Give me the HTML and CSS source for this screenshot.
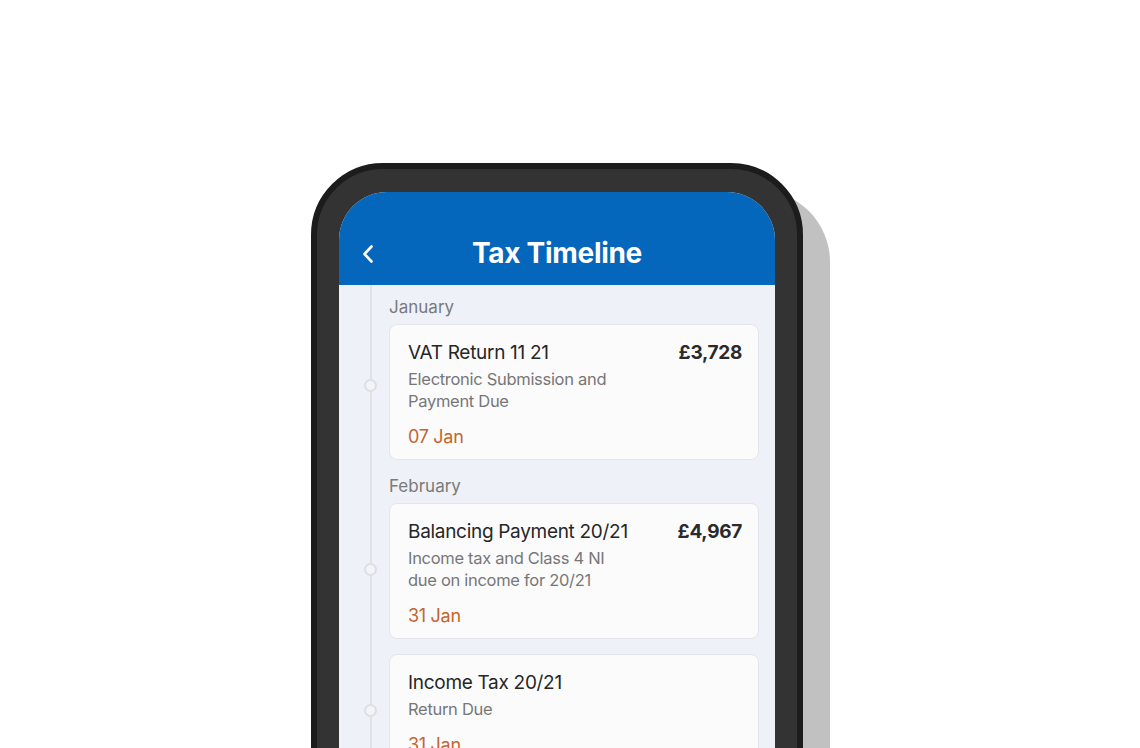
FILE: index.html
```html
<!DOCTYPE html>
<html lang="en">
<head>
  <meta charset="UTF-8">
  <meta name="viewport" content="width=device-width, initial-scale=1.0">
  <title>Tax Timeline</title>
  <link rel="stylesheet" href="styles.css">
</head>
<body>

  <div class="phone">
    <div class="screen">
      <div class="app-bar">
        <span class="back">
          <svg width="14" height="20" viewBox="0 0 14 20">
            <path d="M10.5 2.5 L3.5 10 L10.5 17.5" fill="none" stroke="#fff" stroke-width="2.6" stroke-linecap="round" stroke-linejoin="round"/>
          </svg>
        </span>
        <h1>Tax Timeline</h1>
      </div>

      <div class="timeline">
        <div class="month">January</div>
        <div class="entry">
          <span class="dot dot-first"></span>
          <div class="card">
            <div class="card-top">
              <span class="card-title">VAT Return 11 21</span>
              <span class="amount">£3,728</span>
            </div>
            <p class="desc">Electronic Submission and<br>Payment Due</p>
            <div class="due">07 Jan</div>
          </div>
        </div>

        <div class="month">February</div>
        <div class="entry">
          <span class="dot dot-second"></span>
          <div class="card">
            <div class="card-top">
              <span class="card-title">Balancing Payment 20/21</span>
              <span class="amount">£4,967</span>
            </div>
            <p class="desc">Income tax and Class 4 NI<br>due on income for 20/21</p>
            <div class="due">31 Jan</div>
          </div>
        </div>

        <div class="entry entry-spaced">
          <span class="dot dot-third"></span>
          <div class="card">
            <div class="card-top">
              <span class="card-title">Income Tax 20/21</span>
            </div>
            <p class="desc">Return Due</p>
            <div class="due">31 Jan</div>
          </div>
        </div>
      </div>
    </div>
  </div>

</body>
</html>
```

FILE: styles.css
```css
body {
  margin: 0;
  height: 748px;
  overflow: hidden;
  background: #fff;
  font-family: Inter, "Noto Sans", sans-serif;
}

.phone {
  width: 436px;
  height: 640px;
  margin: 163px 0 0 311px;
  padding: 23px 22px 0;
  background: #333;
  border: 6px solid #1c1c1c;
  border-radius: 72px;
  box-shadow: 27px 27px 0 #c1c1c1;
}

.screen {
  height: 100%;
  background: #eef1f7;
  border-radius: 48px 48px 0 0;
  overflow: hidden;
}

.app-bar {
  height: 93px;
  background: #0567bb;
  display: flex;
  align-items: center;
  justify-content: center;
  padding-top: 28px;
  box-sizing: border-box;
  position: relative;
}

.app-bar h1 {
  margin: 0;
  color: #fff;
  font-size: 28px;
  font-weight: 700;
  letter-spacing: -0.3px;
}

.back {
  position: absolute;
  left: 22px;
  top: 52px;
  display: flex;
}

.timeline {
  position: relative;
  padding: 11px 16px 0 50px;
}

.timeline::before {
  content: "";
  position: absolute;
  left: 31px;
  top: 0;
  bottom: 0;
  width: 2px;
  background: #dfe2e8;
}

.month {
  font-size: 17px;
  color: #7a7a7a;
  line-height: 22px;
  margin-bottom: 6px;
}

.entry {
  position: relative;
  margin-bottom: 15px;
}

.entry-spaced {
  margin-top: 2px;
}

.dot {
  position: absolute;
  left: -25px;
  width: 9px;
  height: 9px;
  border: 2px solid #dcdfe4;
  border-radius: 50%;
  background: #f3f4f7;
}

.dot-first { top: 55px; }
.dot-second { top: 60px; }
.dot-third { top: 50px; }

.card {
  background: #fbfbfc;
  border: 1px solid #e3e5ea;
  border-radius: 8px;
  padding: 16px 16px 11px 18px;
}

.card-top {
  display: flex;
  justify-content: space-between;
  align-items: baseline;
}

.card-title {
  font-size: 19px;
  line-height: 24px;
  color: #262626;
  letter-spacing: -0.3px;
}

.amount {
  font-size: 19px;
  font-weight: 700;
  color: #2a2a2a;
  letter-spacing: -0.3px;
}

.desc {
  margin: 3px 0 0;
  font-size: 16.5px;
  line-height: 22px;
  color: #777;
  letter-spacing: -0.3px;
}

.due {
  margin-top: 14px;
  font-size: 18px;
  line-height: 22px;
  color: #c4652f;
  letter-spacing: -0.3px;
}
```
